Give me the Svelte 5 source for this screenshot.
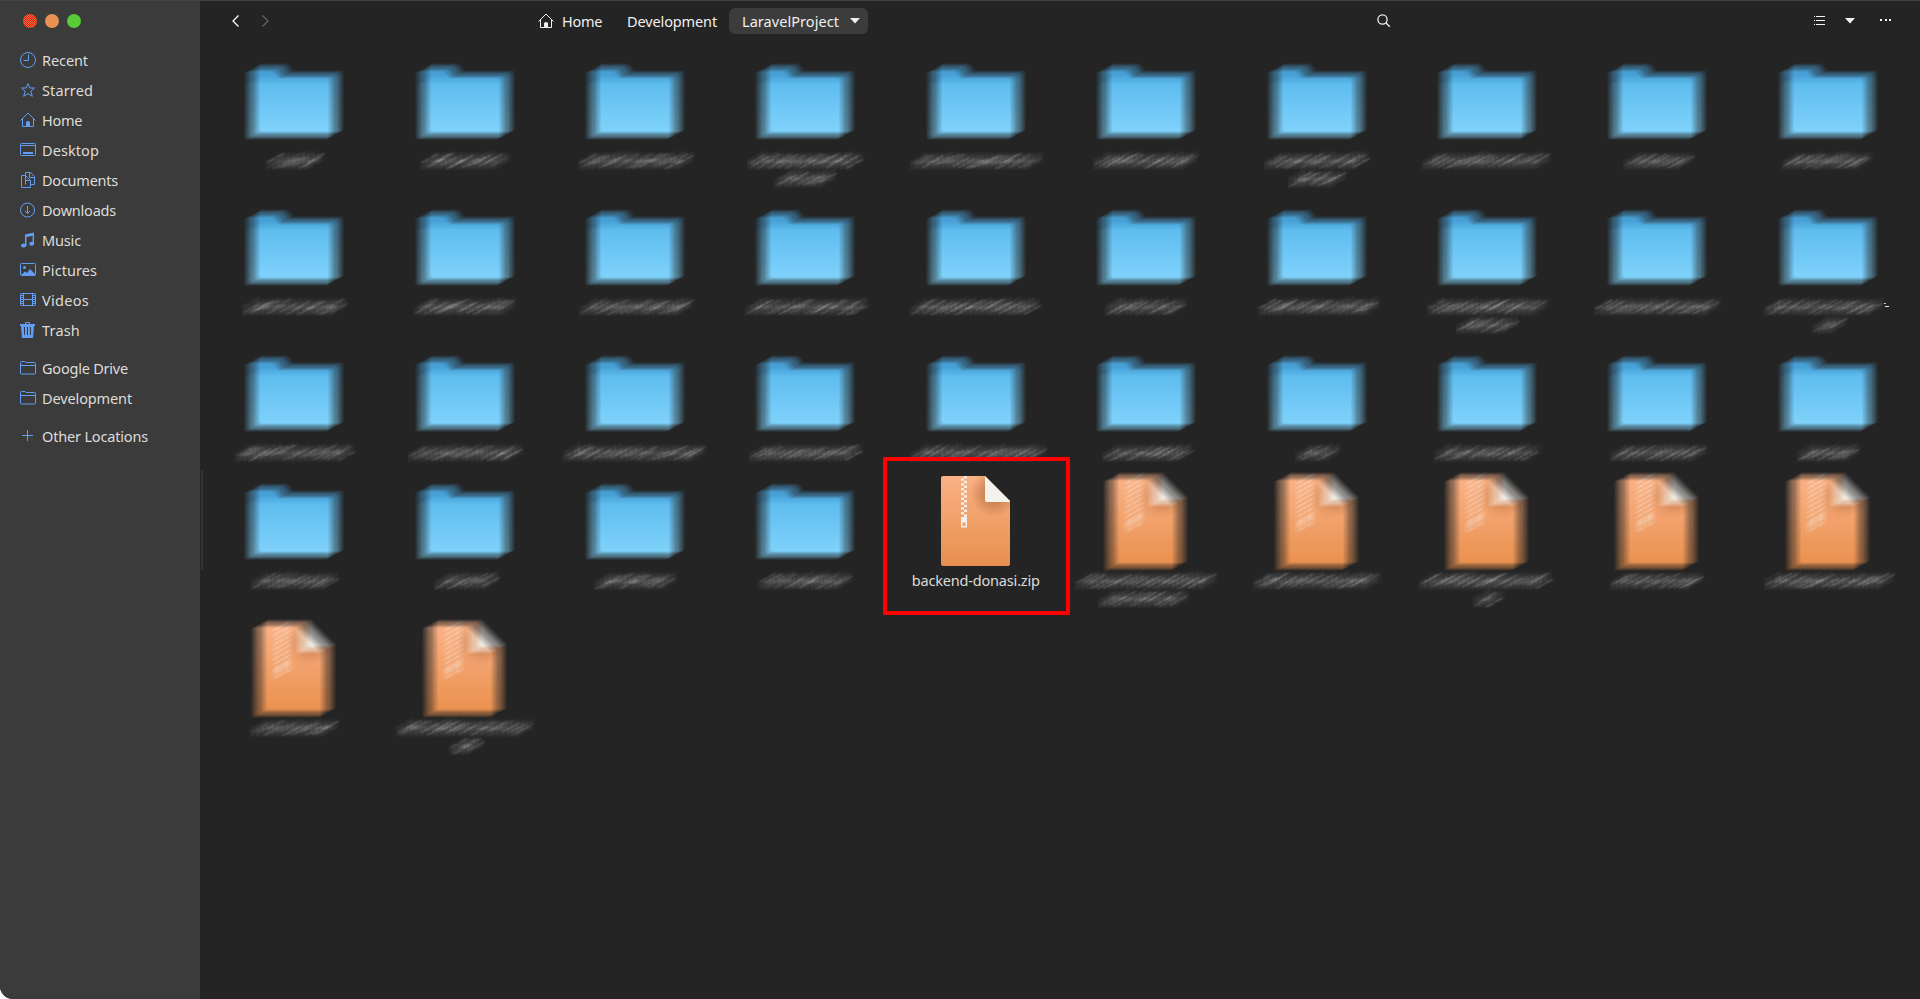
<script>
  const places = [
    { icon: 'recent', name: 'Recent', w: 45 },
    { icon: 'star', name: 'Starred', w: 50 },
    { icon: 'home', name: 'Home', w: 39 },
    { icon: 'desktop', name: 'Desktop', w: 56 },
    { icon: 'documents', name: 'Documents', w: 75 },
    { icon: 'downloads', name: 'Downloads', w: 73 },
    { icon: 'music', name: 'Music', w: 38 },
    { icon: 'pictures', name: 'Pictures', w: 54 },
    { icon: 'videos', name: 'Videos', w: 46 },
    { icon: 'trash', name: 'Trash', w: 37 },
    { icon: 'folder', name: 'Google Drive', w: 85, gap: true },
    { icon: 'folder', name: 'Development', w: 89 },
    { icon: 'plus', name: 'Other Locations', w: 105, gap: true }
  ];

  // Each entry: kind, then left/right extents of each smeared label line, relative to the column centre.
  const raw = [
    ['d', -29, 30], ['d', -46, 47], ['d', -58, 60], ['d', -59, 60, -32, 32], ['d', -67, 69], ['d', -54, 52], ['d', -54, 53, -30, 30], ['d', -66, 66], ['d', -35, 37], ['d', -47, 46],
    ['d', -53, 54], ['d', -52, 53], ['d', -57, 58], ['d', -61, 64], ['d', -67, 65], ['d', -42, 42], ['d', -60, 65], ['d', -61, 64, -32, 32], ['d', -64, 65], ['d', -65, 57, -17, 19],
    ['d', -60, 61], ['d', -58, 60], ['d', -73, 73], ['d', -57, 59], ['d', -67, 71], ['d', -45, 47], ['d', -23, 25], ['d', -54, 56], ['d', -48, 52], ['d', -32, 34],
    ['d', -44, 45], ['d', -32, 35], ['d', -42, 44], ['d', -48, 49], ['z'], ['f', -72, 73, -49, 45], ['f', -65, 66], ['f', -69, 66, -15, 19], ['f', -48, 47], ['f', -65, 66],
    ['f', -45, 45], ['f', -70, 70, -17, 20]
  ];

  function strokes(seed, left, right) {
    const out = [];
    let s = seed * 7919 + 17;
    const rnd = () => ((s = (s * 1103515245 + 12345) % 2147483648) / 2147483648);
    let x = left + 9;
    while (x < right - 9) {
      const r = rnd();
      const tall = r > 0.75;
      out.push({ x, y: tall ? -6 : -3, h: tall ? 11 : 8, w: 1, o: 0.6 });
      out.push({ x, y: -4 + rnd() * 7, h: 2, w: 3.5, o: 0.5 + rnd() * 0.5 });
      x += 3.4 + rnd() * 3.2;
    }
    return { left, right, out };
  }

  const files = raw.map((r, i) => ({
    kind: r[0],
    stray: i === 19,
    lines: [r.slice(1, 3), r.slice(3, 5)].filter((l) => l.length).map((l, n) => strokes(i * 2 + n + 1, l[0], l[1]))
  }));

  // Spread the letters so each name takes its intended width.
  function fit(node, width) {
    const count = node.textContent.length;
    node.style.letterSpacing = '0px';
    const natural = node.getBoundingClientRect().width;
    node.style.letterSpacing = (width + 1 - natural) / count + 'px';
  }
</script>

{#snippet glyph(icon)}
  <svg class="ico" width="16" height="16" viewBox="0 0 16 16" fill="none" stroke="currentColor">
    {#if icon === 'recent'}
      <circle cx="8" cy="8" r="7.5" /><path d="M8.5 2.5v6h-5" />
    {:else if icon === 'star'}
      <path d="M8 1.6l1.8 4.4h4.700l-3.600 3.200 1.400 5.100L8 11.600l-4.300 2.700 1.400-5.100L1.500 6h4.700z" />
    {:else if icon === 'home'}
      <path d="M.5 8.500L8 1l7.500 7.500M2.500 7v7.500h11V7" /><path d="M6 15v-4.500q0-1.500 2-1.500t2 1.500V15z" fill="currentColor" stroke="none" />
    {:else if icon === 'desktop'}
      <rect x=".5" y="1.500" width="15" height="12" rx="1" /><path d="M1 3.500h14" /><path d="M3 11h10" stroke-width="2" />
    {:else if icon === 'documents'}
      <path d="M5 3.500H1.500v12h9v-3" /><path d="M5.500 12.500V.500h5l4 4v8h-4" /><path d="M5.500 3.500l5 5v4M5.500 8.500h5M9.500.500v5h5" />
    {:else if icon === 'downloads'}
      <circle cx="7.500" cy="8" r="7" /><path d="M7.500 4v7.500M5 9l2.500 2.500L10 9" />
    {:else if icon === 'music'}
      <path d="M5 2.500L14 .500v3L6.500 5v8.500H5z" fill="currentColor" stroke="none" /><path d="M13.300 2v9.500" stroke-width="1.400" /><ellipse cx="3.700" cy="13.500" rx="2.700" ry="2" fill="currentColor" stroke="none" /><ellipse cx="11.700" cy="11.800" rx="2.500" ry="2" fill="currentColor" stroke="none" />
    {:else if icon === 'pictures'}
      <rect x=".5" y="1.500" width="15" height="12" rx="1" /><circle cx="4.500" cy="5.500" r="1.500" fill="currentColor" stroke="none" /><path d="M1 13l4-3.500 2 1.500 3-4 5 5v1.500H1z" fill="currentColor" stroke="none" />
    {:else if icon === 'videos'}
      <rect x=".5" y="1.500" width="15" height="12" rx="1" /><path d="M3.500 1.500v12M12.500 1.500v12M3.500 7.500h9M1 3.500h2M1 5.500h2M1 7.500h2M1 9.500h2M1 11.500h2M13 3.500h2M13 5.500h2M13 7.500h2M13 9.500h2M13 11.500h2" />
    {:else if icon === 'trash'}
      <path d="M5.500 2.500v-2h4v2" /><path d="M0 2h15v2h-1l-1 12H2L1 4H0z" fill="currentColor" stroke="none" /><path d="M4.500 5v8M7.500 5v8M10.500 5v8" stroke="#3b3b3b" />
    {:else if icon === 'folder'}
      <path d="M.5 13V2.500q0-1 1-1h3.500l1 1h8.500q1 0 1 1V13q0 1-1 1h-13q-1 0-1-1zM1 5.500h14" />
    {:else}
      <path d="M7.500 2v11M2 7.500h11" />
    {/if}
  </svg>
{/snippet}

<svg class="defs" width="0" height="0" aria-hidden="true">
  <defs>
    <filter id="smear" x="-40%" y="-40%" width="180%" height="180%" color-interpolation-filters="sRGB">
      <feOffset in="SourceGraphic" dx="-8" dy="5" result="s" />
      <feOffset in="s" dx="1" dy="-1" result="a" />
      <feComposite in="s" in2="a" operator="arithmetic" k2=".5" k3=".5" result="s1" />
      <feOffset in="s1" dx="2" dy="-1" result="b" />
      <feComposite in="s1" in2="b" operator="arithmetic" k2=".5" k3=".5" result="s2" />
      <feOffset in="s2" dx="4" dy="-2" result="c" />
      <feComposite in="s2" in2="c" operator="arithmetic" k2=".5" k3=".5" result="s3" />
      <feOffset in="s3" dx="9" dy="-5" result="d" />
      <feComposite in="s3" in2="d" operator="arithmetic" k2=".5" k3=".5" />
    </filter>
    <linearGradient id="blue" x1="0" y1="0" x2="0" y2="1"><stop offset="0" stop-color="#5bb9ec" /><stop offset="1" stop-color="#80d3fb" /></linearGradient>
    <linearGradient id="orange" x1="0" y1="0" x2="0" y2="1"><stop offset="0" stop-color="#fab184" /><stop offset="1" stop-color="#e88f4e" /></linearGradient>
    <radialGradient id="shade" gradientUnits="userSpaceOnUse" cx="53" cy="17" r="24"><stop offset=".4" stop-color="#a56036" stop-opacity=".5" /><stop offset="1" stop-color="#a56036" stop-opacity="0" /></radialGradient>
  </defs>
</svg>

{#snippet page()}
  <path d="M2 0h42l25 25v63q0 2-2 2H2q-2 0-2-2V2q0-2 2-2z" fill="url(#orange)" />
  <path d="M25 0h19l25 25v17H25z" fill="url(#shade)" />
  <path d="M44 0l25 25v1H46q-2 0-2-2z" fill="#f3f2ed" />
  {#each Array(17) as _, i}
    <rect x={i % 2 ? 20 : 23} y={i * 2.4} width="3" height="2.4" fill="#f5f0eb" />
  {/each}
  <path d="M20 41h6v10.500h-6zM21.500 46.500v3.500h3v-3.500z" fill="#f5f0eb" fill-rule="evenodd" />
{/snippet}

<div class="window">
  <aside>
    <div class="lights"><i class="close"></i><i class="min"></i><i class="max"></i></div>
    <nav>
      {#each places as p}
        <div class="place" class:gap={p.gap}>{@render glyph(p.icon)}<span use:fit={p.w}>{p.name}</span></div>
      {/each}
    </nav>
  </aside>

  <main>
    <header>
      <svg class="arrows" width="40" height="16" viewBox="0 0 40 16" fill="none"><path d="M6.500 2.500L1 8l5.500 5.500" stroke="#fff" stroke-width="1.300" /><path d="M30.500 2.500L36 8l-5.500 5.500" stroke="#666" stroke-width="1.200" /></svg>
      <div class="path">
        <div class="crumb first">{@render glyph('home')}<span use:fit={39}>Home</span></div>
        <div class="crumb"><span use:fit={89}>Development</span></div>
        <div class="crumb current"><span use:fit={96}>LaravelProject</span><svg width="10" height="6" viewBox="0 0 10 6"><path d="M0 0h10L5 5.500z" fill="#f5f0ee" /></svg></div>
      </div>
      <svg class="search" width="14" height="14" viewBox="0 0 14 14" fill="none" stroke="#f2efee"><circle cx="5.500" cy="5.500" r="4.600" stroke-width="1.300" /><path d="M8.800 8.800l4 4" stroke-width="1.300" /></svg>
      <svg class="view" width="80" height="10" viewBox="0 0 80 10" fill="#f5f2f0"><path d="M0 0h1v1H0zM2 0h9v1H2zM0 4h1v1H0zM2 4h9v1H2zM0 8h1v1H0zM2 8h9v1H2zM31 2h10l-5 5.500zM66 3h2v2h-2zM71 3h2v2h-2zM75 3h2v2h-2z" /></svg>
    </header>

    <section class="grid">
      {#each files as f}
        <div class="item">
          {#if f.kind === 'd'}
            <svg class="pic smear" width="128" height="96" viewBox="-64 -10 128 96">
              <path d="M-42 17V8q0-3 3-3h23q3 0 5 3l3 4h47q3 0 3 3v10h-84z" fill="#479fd5" />
              <rect x="-42" y="17" width="84" height="56" rx="3" fill="url(#blue)" />
            </svg>
          {:else}
            <svg class="pic" class:smear={f.kind === 'f'} width="128" height="96" viewBox="-29 -4 128 96">{@render page()}</svg>
          {/if}
          {#if f.kind === 'z'}
            <span class="name" use:fit={127}>backend-donasi.zip</span>
            <div class="mark"></div>
          {:else}
            <svg class="label" width="170" height="40" viewBox="-85 -12 170 40">
              {#each f.lines as line, n}
                <rect x={line.left + 8} y={n * 18 - 5} width={line.right - line.left - 16} height="11" opacity=".12" />
                {#each line.out as s}
                  <rect x={s.x} y={s.y + n * 18} width={s.w} height={s.h} opacity={s.o} />
                {/each}
              {/each}
            </svg>
            {#if f.stray}<i class="stray"></i>{/if}
          {/if}
        </div>
      {/each}
    </section>
  </main>
  <div class="edge"></div>
</div>

<style>
  :global(body) { background: #fff; }
  .defs { position: absolute; }
  .window {
    display: flex; width: 1920px; height: 999px; overflow: hidden; position: relative;
    box-sizing: border-box; border-top: 1px solid #444; border-bottom-left-radius: 13px;
    background: #242424; font-family: 'Noto Sans', sans-serif; font-size: 14.500px;
  }
  aside { width: 200px; flex: none; background: #3b3b3b; color: #dedbd8; }
  .lights { display: flex; gap: 8px; padding: 13px 0 0 23px; }
  .lights i { width: 14px; height: 14px; border-radius: 50%; }
  .close { background: repeating-conic-gradient(#ff1800 0 25%, #d97850 0 50%) 0 0 / 2px 2px; }
  .min { background: #e99153; }
  .max { background: #58cb38; }
  nav { padding-top: 17px; }
  .place { display: flex; align-items: center; gap: 6px; height: 30px; padding-left: 20px; }
  .place span { margin-top: -1px; }
  .gap { margin-top: 8px; }
  .place .ico { color: #609df5; }
  span { white-space: nowrap; }
  main { flex: 1; min-width: 0; box-sizing: border-box; border-bottom: 1px solid #271f24; }
  header { display: flex; align-items: center; height: 40px; padding-left: 32px; color: #f2efee; }
  .path { display: flex; align-items: center; margin-left: 251px; }
  .crumb { display: flex; align-items: center; height: 26px; padding: 0 12px; }
  .crumb span { margin-top: -1px; }
  .first { gap: 8px; padding-left: 15px; padding-right: 13px; }
  .current { gap: 11px; padding: 0 8px 0 13px; border-radius: 6px; background: #3c3c3c; }
  .search { margin-left: 509px; }
  .view { margin-left: 423px; }
  .grid {
    display: grid; grid-template-columns: repeat(10, 170.400px);
    grid-template-rows: 146px 146px 128px 147px 146px; padding-left: 9px; padding-top: 11px;
  }
  .item { display: flex; flex-direction: column; align-items: center; position: relative; }
  .pic { flex: none; overflow: visible; }
  .smear { filter: blur(0.700px) url(#smear); }
  .label { fill: #d8d8d8; overflow: visible; filter: url(#smear); }
  .name { color: #dedbd8; line-height: 20px; margin-top: 2px; }
  .mark { position: absolute; left: -8px; top: -15px; width: 179px; height: 150px; border: 4px solid #f00; }
  .stray { position: absolute; left: 142px; top: 108px; width: 4px; height: 1px; background: #ece6e0; }
  .stray::before { content: ''; position: absolute; left: -1px; top: -3px; width: 2px; height: 1px; background: #ccc; }
  .edge { position: absolute; left: 201px; top: 469px; width: 2px; height: 100px; background: #333; }
</style>
